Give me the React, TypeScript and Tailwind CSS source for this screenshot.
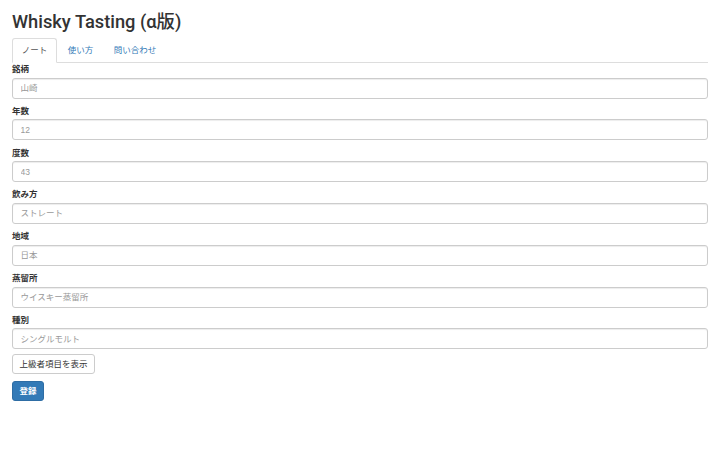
import React from 'react';

const jp = "font-['Liberation_Sans','Noto_Sans_CJK_JP',sans-serif]";

const fields = [
  { label: '銘柄', placeholder: '山崎' },
  { label: '年数', placeholder: '12' },
  { label: '度数', placeholder: '43' },
  { label: '飲み方', placeholder: 'ストレート' },
  { label: '地域', placeholder: '日本' },
  { label: '蒸留所', placeholder: 'ウイスキー蒸留所' },
  { label: '種別', placeholder: 'シングルモルト' },
];

export default function App() {
  return (
    <div className={`${jp} min-h-[456px] bg-white px-3 text-[#333]`}>
      {/* Title */}
      <h1 className="pt-[11px] font-['Roboto','Noto_Sans_CJK_JP',sans-serif] text-[18.3px] leading-[22px] font-medium text-[#333]">
        Whisky Tasting (α版)
      </h1>

      {/* Tabs */}
      <ul className="mt-[5px] flex border-b border-[#ddd] text-[8.5px]">
        <li className="-mb-px mr-px">
          <span className="block rounded-t-[3px] border border-[#ddd] border-b-white bg-white px-[8.75px] leading-[23px] text-[#555]">
            ノート
          </span>
        </li>
        <li className="-mb-px mr-px">
          <span className="block border border-transparent px-[8.75px] leading-[23px] text-[#337ab7]">
            使い方
          </span>
        </li>
        <li className="-mb-px">
          <span className="block border border-transparent px-[8.75px] leading-[23px] text-[#337ab7]">
            問い合わせ
          </span>
        </li>
      </ul>

      {/* Form */}
      <form>
        {fields.map((f) => (
          <div key={f.label} className="mb-[6.2px]">
            <label className="mb-[2.6px] block text-[8.5px] leading-[12px] font-bold text-[#333]">
              {f.label}
            </label>
            <input
              type="text"
              placeholder={f.placeholder}
              className="block h-[21px] w-full rounded-[3px] border border-[#ccc] bg-white px-[7.5px] text-[8.5px] text-[#555] shadow-[inset_0_1px_1px_rgba(0,0,0,0.075)] outline-none placeholder:text-[#999]"
            />
          </div>
        ))}

        <div className="-mt-px flex flex-col items-start gap-[7px]">
          <button
            type="button"
            className="flex h-[20px] w-[83px] items-center justify-center rounded-[3px] border border-[#ccc] bg-white text-[8.5px] leading-[12px] text-[#333]"
          >
            上級者項目を表示
          </button>
          <button
            type="button"
            className="flex h-[20px] w-[32px] items-center justify-center rounded-[3px] border border-[#2e6da4] bg-[#337ab7] text-[8.5px] leading-[12px] font-bold text-white"
          >
            登録
          </button>
        </div>
      </form>
    </div>
  );
}
